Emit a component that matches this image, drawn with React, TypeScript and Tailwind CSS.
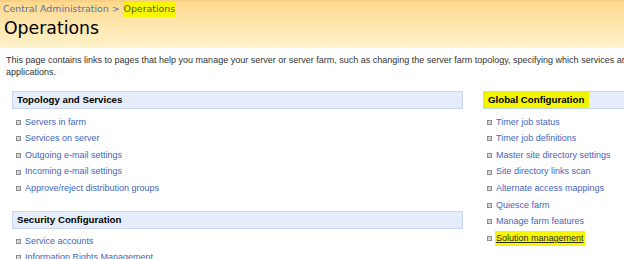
const leftTop = [
  'Servers in farm',
  'Services on server',
  'Outgoing e-mail settings',
  'Incoming e-mail settings',
  'Approve/reject distribution groups',
];

const leftSecurity = ['Service accounts', 'Information Rights Management'];

const rightGlobal = [
  'Timer job status',
  'Timer job definitions',
  'Master site directory settings',
  'Site directory links scan',
  'Alternate access mappings',
  'Quiesce farm',
  'Manage farm features',
];

function Bullet() {
  return (
    <span className="mr-[4px] inline-block h-[5px] w-[5px] shrink-0 border border-[#8d8d8d] bg-[#d8d8d8]" />
  );
}

function LinkRow({ label, marked }: { label: string; marked?: boolean }) {
  return (
    <div className="flex h-[16.6px] items-center pl-[4px]">
      <Bullet />
      {marked ? (
        <span className="-ml-[1px] bg-[#f8f500] px-[1px] leading-[15px] text-[#2e2e1c] underline">{label}</span>
      ) : (
        <span className="whitespace-nowrap text-[#4466bb]">{label}</span>
      )}
    </div>
  );
}

function SectionTitle({ title, marked }: { title: string; marked?: boolean }) {
  return (
    <div className="flex h-[18px] items-center border border-[#c6d6f0] bg-[#e5edfa] pl-[4px] text-[9.7px] font-bold text-black">
      {marked ? (
        <span className="-ml-[4px] flex h-[16px] items-center bg-[#f2f500] pr-[5px] pl-[4px]">{title}</span>
      ) : (
        <span>{title}</span>
      )}
    </div>
  );
}

export default function App() {
  return (
    <div className="h-[259px] w-[624px] overflow-hidden bg-white font-['Liberation_Sans',Arial,sans-serif] text-[9px]">
      {/* Header */}
      <div className="h-[48px] border-t-[2px] border-[#f7cf86] bg-gradient-to-b from-[#fed98e] to-[#fff2cc] pl-[3px] font-['DejaVu_Sans',sans-serif]">
        <div className="flex h-[15px] items-center text-[9.4px] text-[#5671a8]">
          <span>Central Administration &gt;&nbsp;</span>
          <span className="bg-[#f7f500] px-[1px] text-[#5d5a2a]">Operations</span>
        </div>
        <div className="pl-[1px] text-[17.3px] leading-[22px] text-black">Operations</div>
      </div>

      {/* Description */}
      <div className="mt-[6px] pl-[6px] leading-[12px] whitespace-nowrap text-[#333]">
        <div>
          This page contains links to pages that help you manage your server or server farm, such as changing the server farm topology, specifying which services are running on each server, and
        </div>
        <div>applications.</div>
      </div>

      {/* Columns */}
      <div className="mt-[13px] flex gap-[20px] pl-[12px]">
        <div className="w-[451px] shrink-0">
          <SectionTitle title="Topology and Services" />
          <div className="mt-[5px]">
            {leftTop.map((l) => (
              <LinkRow key={l} label={l} />
            ))}
          </div>
          <div className="mt-[14px]">
            <SectionTitle title="Security Configuration" />
          </div>
          <div className="mt-[4px]">
            {leftSecurity.map((l) => (
              <LinkRow key={l} label={l} />
            ))}
          </div>
        </div>
        <div className="w-[200px] shrink-0">
          <SectionTitle title="Global Configuration" marked />
          <div className="mt-[5px]">
            {rightGlobal.map((l) => (
              <LinkRow key={l} label={l} />
            ))}
            <LinkRow label="Solution management" marked />
          </div>
        </div>
      </div>
    </div>
  );
}
